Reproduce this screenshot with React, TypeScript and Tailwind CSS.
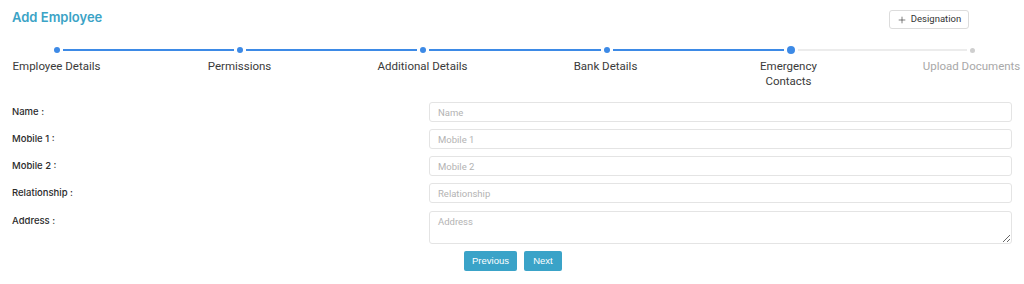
import { Plus } from 'lucide-react'

// ─── Data ────────────────────────────────────────────────────────────────────

const STEPS = [
  { label: 'Employee Details', done: true },
  { label: 'Permissions', done: true },
  { label: 'Additional Details', done: true },
  { label: 'Bank Details', done: true },
  { label: 'Emergency Contacts', done: true, active: true },
  { label: 'Upload Documents', done: false },
]

const FIELDS = [
  { label: 'Name', placeholder: 'Name' },
  { label: 'Mobile 1', placeholder: 'Mobile 1' },
  { label: 'Mobile 2', placeholder: 'Mobile 2' },
  { label: 'Relationship', placeholder: 'Relationship' },
]

// ─── Stepper ─────────────────────────────────────────────────────────────────

function Stepper() {
  return (
    <div>
      {/* dots + connectors */}
      <div className="ml-[42px] mr-[37px] flex h-[8px] items-center">
        {STEPS.map((step, i) => (
          <div key={step.label} className={i < STEPS.length - 1 ? 'flex flex-1 items-center' : 'flex items-center'}>
            {step.active ? (
              <span className="h-[8px] w-[8px] shrink-0 rounded-full bg-[#3d8ae6]" />
            ) : step.done ? (
              <span className="h-[6px] w-[6px] shrink-0 rounded-full bg-[#3d8ae6]" />
            ) : (
              <span className="h-[5px] w-[5px] shrink-0 rounded-full bg-[#cfcfcf]" />
            )}
            {i < STEPS.length - 1 && (
              <span
                className={
                  STEPS[i + 1].done
                    ? 'mx-[3px] h-[2px] flex-1 bg-[#3d8ae6]'
                    : 'mx-[3px] h-[2px] flex-1 bg-[#ececec]'
                }
              />
            )}
          </div>
        ))}
      </div>

      {/* labels */}
      <div className="ml-[-47px] mt-[5px] grid w-[1098px] grid-cols-6">
        {STEPS.map((step) => (
          <div
            key={step.label}
            className={
              step.done
                ? 'text-center text-[11.5px] leading-[15px] text-[#3a3a3a]'
                : 'text-center text-[11.5px] leading-[15px] text-[#a8a8a8]'
            }
          >
            {step.label === 'Emergency Contacts' ? (
              <>
                Emergency
                <br />
                Contacts
              </>
            ) : (
              step.label
            )}
          </div>
        ))}
      </div>
    </div>
  )
}

// ─── App ─────────────────────────────────────────────────────────────────────

export default function App() {
  return (
    <div className="h-[284px] w-[1024px] overflow-hidden bg-white px-3 pt-[9px] font-['Roboto',sans-serif]">
      {/* header */}
      <div className="flex items-start justify-between">
        <h1 className="font-['Inter',sans-serif] text-[13px] font-semibold leading-[16px] text-[#3ba3c6]">
          Add Employee
        </h1>
        <button className="mr-[43px] mt-[1px] flex h-[19px] w-[80px] items-center justify-center gap-[4px] rounded-[3px] border border-[#dcdcdc] bg-white text-[9.5px] text-[#333333]">
          <Plus className="h-[10px] w-[10px]" strokeWidth={1.5} />
          Designation
        </button>
      </div>

      <div className="mt-[17px]">
        <Stepper />
      </div>

      {/* form */}
      <div className="mt-[13px] flex flex-col gap-[7px]">
        {FIELDS.map((f) => (
          <div key={f.label} className="flex items-start">
            <label className="w-[417px] shrink-0 font-['Inter',sans-serif] text-[9.5px] font-medium leading-[20px] text-[#2b2b2b]">
              {f.label} :
            </label>
            <input
              placeholder={f.placeholder}
              className="h-[20px] flex-1 rounded-[3px] border border-[#e4e4e4] px-[8px] text-[9.5px] text-[#333333] outline-none placeholder:text-[#b3b3b3]"
            />
          </div>
        ))}
        <div className="mt-[1px] flex items-start">
          <label className="w-[417px] shrink-0 font-['Inter',sans-serif] text-[9.5px] font-medium leading-[20px] text-[#2b2b2b]">
            Address :
          </label>
          <textarea
            placeholder="Address"
            className="h-[33px] flex-1 rounded-[3px] border border-[#e4e4e4] px-[8px] py-[3px] text-[9.5px] text-[#333333] outline-none placeholder:text-[#b3b3b3]"
          />
        </div>
      </div>

      {/* actions */}
      <div className="mt-[7px] flex justify-center gap-[7px] pl-[2px]">
        <button className="h-[20px] w-[53px] rounded-[2px] bg-[#3aa3c8] font-['Liberation_Sans',sans-serif] text-[9.5px] text-white">
          Previous
        </button>
        <button className="h-[20px] w-[38px] rounded-[2px] bg-[#3aa3c8] font-['Liberation_Sans',sans-serif] text-[9.5px] text-white">
          Next
        </button>
      </div>
    </div>
  )
}
